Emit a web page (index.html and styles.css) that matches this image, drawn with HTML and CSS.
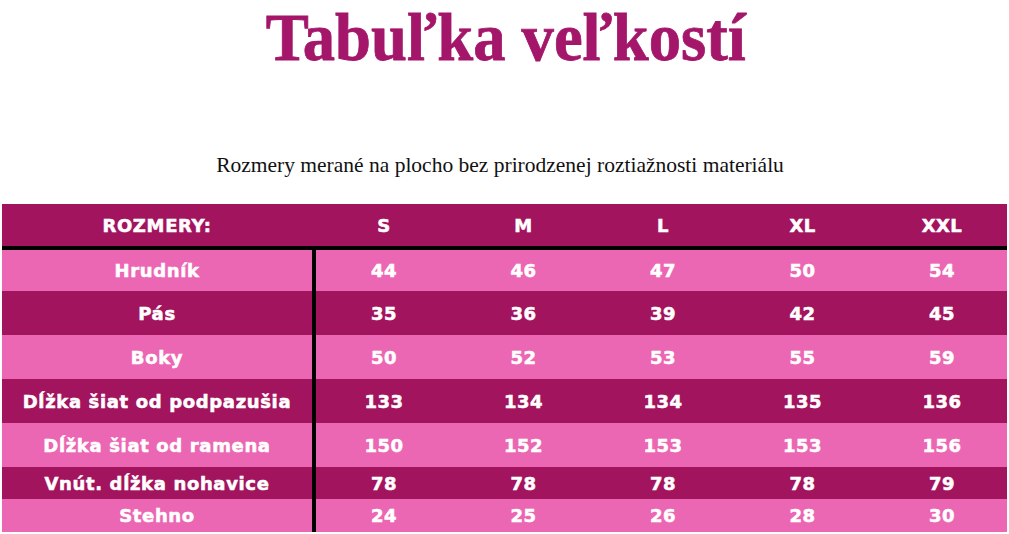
FILE: index.html
```html
<!DOCTYPE html>
<html lang="sk">
<head>
<meta charset="utf-8">
<title>Tabuľka veľkostí</title>
<link rel="stylesheet" href="styles.css">
</head>
<body>
<header class="intro">
  <h1 class="title"><span class="title-text">Tabuľka veľkostí</span></h1>
  <p class="subtitle">Rozmery merané na plocho bez prirodzenej roztiažnosti materiálu</p>
</header>
<section class="sizes">
  <div class="row head">
    <div class="label">ROZMERY:</div>
    <div class="cell">S</div><div class="cell">M</div><div class="cell">L</div><div class="cell">XL</div><div class="cell">XXL</div>
  </div>
  <div class="row light h41">
    <div class="label">Hrudník</div>
    <div class="cell">44</div><div class="cell">46</div><div class="cell">47</div><div class="cell">50</div><div class="cell">54</div>
  </div>
  <div class="row dark h44">
    <div class="label">Pás</div>
    <div class="cell">35</div><div class="cell">36</div><div class="cell">39</div><div class="cell">42</div><div class="cell">45</div>
  </div>
  <div class="row light h44">
    <div class="label">Boky</div>
    <div class="cell">50</div><div class="cell">52</div><div class="cell">53</div><div class="cell">55</div><div class="cell">59</div>
  </div>
  <div class="row dark h44">
    <div class="label">Dĺžka šiat od podpazušia</div>
    <div class="cell">133</div><div class="cell">134</div><div class="cell">134</div><div class="cell">135</div><div class="cell">136</div>
  </div>
  <div class="row light h44">
    <div class="label">Dĺžka šiat od ramena</div>
    <div class="cell">150</div><div class="cell">152</div><div class="cell">153</div><div class="cell">153</div><div class="cell">156</div>
  </div>
  <div class="row dark h32">
    <div class="label">Vnút. dĺžka nohavice</div>
    <div class="cell">78</div><div class="cell">78</div><div class="cell">78</div><div class="cell">78</div><div class="cell">79</div>
  </div>
  <div class="row light h33">
    <div class="label">Stehno</div>
    <div class="cell">24</div><div class="cell">25</div><div class="cell">26</div><div class="cell">28</div><div class="cell">30</div>
  </div>
</section>
</body>
</html>
```

FILE: styles.css
```css
html, body {
  margin: 0;
  padding: 0;
  background: #ffffff;
}

body {
  width: 1009px;
  height: 534px;
  overflow: hidden;
}

.intro {
  text-align: center;
}

.title {
  margin: 0;
  padding-top: 3px;
  padding-left: 3px;
  height: 68px;
  font-family: "Liberation Serif", "Times New Roman", serif;
  font-weight: bold;
  font-size: 68px;
  line-height: 68px;
  color: #a3166a;
  -webkit-text-stroke: 0.8px #a3166a;
}

.title-text {
  display: inline-block;
  transform: scaleX(0.95);
  transform-origin: center;
}

.subtitle {
  margin: 84px 0 0 0;
  height: 49px;
  font-family: "Liberation Serif", "Times New Roman", serif;
  font-size: 21.5px;
  line-height: 21.5px;
  color: #111111;
  text-indent: -9px;
}

.sizes {
  margin-left: 2px;
  width: 1005px;
  overflow: hidden;
  font-family: "DejaVu Sans", Verdana, sans-serif;
  font-weight: bold;
  font-size: 18px;
  letter-spacing: 0.45px;
  color: #ffffff;
  -webkit-text-stroke: 0.55px #ffffff;
}

.row {
  display: grid;
  grid-template-columns: 314px repeat(5, 139.5px);
  align-items: center;
}

.row > div {
  display: flex;
  align-items: center;
  justify-content: center;
  height: 100%;
  white-space: nowrap;
}

.cell {
  padding-right: 3.5px;
}

.head {
  height: 42px;
  background: #a3145f;
  border-top: 1px solid #d46aa4;
  box-sizing: content-box;
  border-bottom: 4px solid #000000;
  margin-top: -1px;
}

.head .label {
  padding-right: 4px;
}

.label {
  box-sizing: border-box;
  letter-spacing: 0.65px;
}

.row:not(.head) .label {
  border-right: 4px solid #000000;
}

.dark {
  background: #a3145f;
}

.light {
  background: #ec67b3;
}

.h41 { height: 41px; }
.h44 { height: 44px; }
.h32 { height: 32px; }
.h33 { height: 33px; }
```
